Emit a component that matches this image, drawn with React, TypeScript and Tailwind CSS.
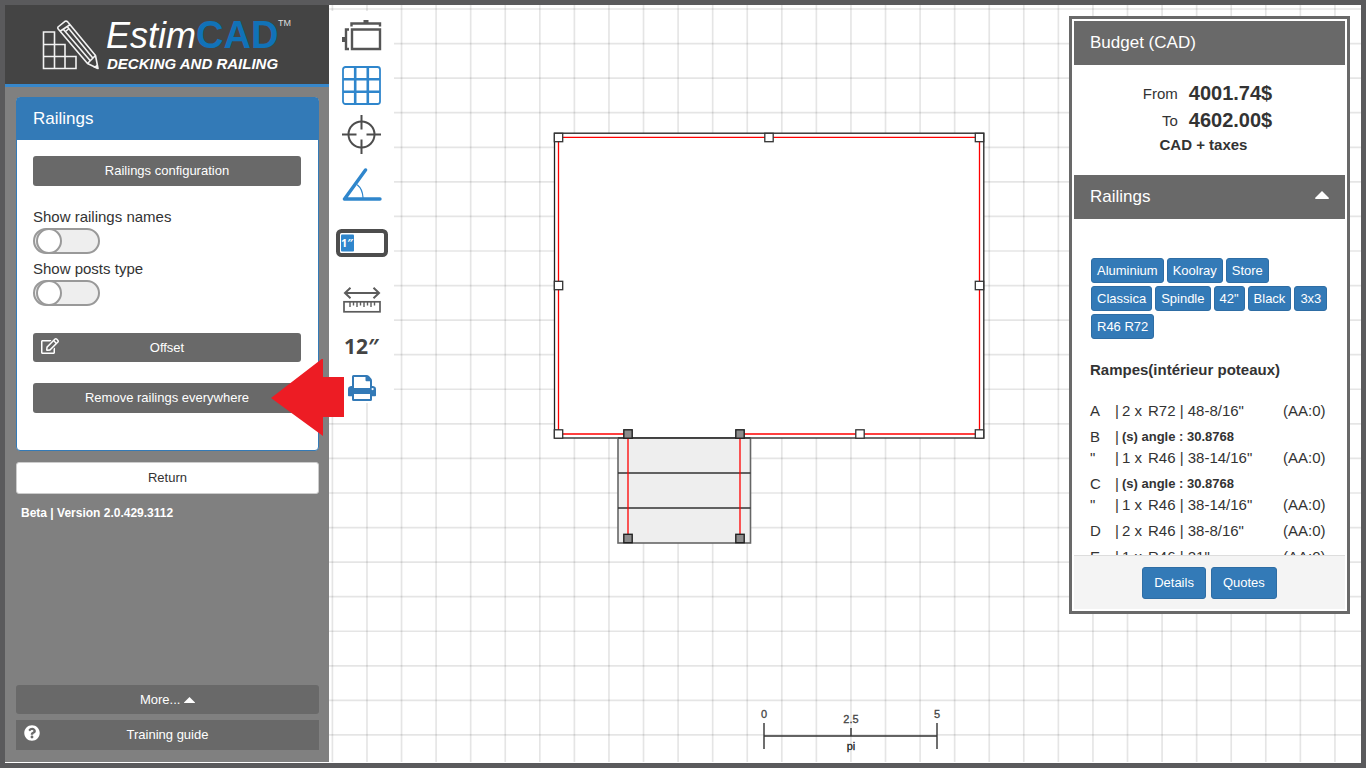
import React from "react"
import { FaQuestionCircle, FaRegEdit } from "react-icons/fa"

const GRID_STEP = 34.57

const tags = [
  "Aluminium",
  "Koolray",
  "Store",
  "Classica",
  "Spindle",
  '42"',
  "Black",
  "3x3",
  "R46 R72",
]

type RailingRow = {
  name: string
  angle?: string
  qty?: string
  item?: string
}

const rows: RailingRow[] = [
  { name: "A", qty: "2 x", item: 'R72 | 48-8/16"' },
  { name: "B", angle: "(s) angle : 30.8768" },
  { name: '"', qty: "1 x", item: 'R46 | 38-14/16"' },
  { name: "C", angle: "(s) angle : 30.8768" },
  { name: '"', qty: "1 x", item: 'R46 | 38-14/16"' },
  { name: "D", qty: "2 x", item: 'R46 | 38-8/16"' },
  { name: "E", qty: "1 x", item: 'R46 | 21"' },
]

const openPosts = [
  [558.5, 137.5],
  [769, 137.5],
  [979.5, 137.5],
  [558.5, 285.5],
  [979.5, 285.5],
  [558.5, 434],
  [860, 434],
  [979.5, 434],
]

const stairPosts = [
  [628, 434],
  [740, 434],
  [628, 538.5],
  [740, 538.5],
]

const Logo = () => (
  <svg width="256" height="66" viewBox="40 10 256 66" role="img" aria-label="EstimCAD">
    <g fill="none" stroke="#f2f2f2" strokeWidth="1.6">
      <path d="M43.5 32H54.5V68.5H43.5ZM43.5 44.5H65V68.5M43.5 56.5H76V68.5H43.5M54.5 44V68.5M65 56V68.5" />
      <path
        strokeLinejoin="round"
        d="M58 27 L65 21.3 Q67 20.5 68.2 22.4 L95.5 55.5 L98 68.5 L87.5 63.5 L58.2 29 Q57.3 28 58 27ZM60.5 31 L70.3 24.5M87.5 63.5 L95.5 55.5M63.5 29.5 L90.5 61M67.5 27 L93 58.3M65.5 31.5 L68.5 29"
      />
    </g>
    <path d="M93.3 67.6 L97 64.6 L98.3 69Z" fill="#f2f2f2" />
    <text x="106" y="48" fontSize="36" fontStyle="italic" fill="#fff">
      Estim
    </text>
    <text x="196" y="48" fontSize="38" fontWeight="bold" fill="#1172b8">
      CAD
    </text>
    <text x="278" y="26" fontSize="9" fill="#ddd">
      TM
    </text>
    <text x="107" y="69" fontSize="15" fontWeight="bold" fontStyle="italic" fill="#fff">
      DECKING AND RAILING
    </text>
  </svg>
)

const CaretUp = ({ width }: { width: number }) => (
  <svg width={width} viewBox="0 0 14 8" className="inline-block fill-white" aria-hidden="true">
    <path d="M7 0 L14 7 Q14 8 13 8 H1 Q0 8 0 7Z" />
  </svg>
)

type ToggleProps = {
  id: string
  label: string
}

const Toggle: React.FC<ToggleProps> = ({ id, label }) => {
  return (
    <label htmlFor={id} className="block w-fit cursor-pointer text-[15px] leading-[22px]">
      {label}
      <input id={id} type="checkbox" className="peer sr-only" />
      <span className="flex h-[26px] w-[67px] rounded-full border-2 border-[#999] bg-[#eee] peer-checked:justify-end peer-checked:bg-[#337ab7]">
        <span className="-my-0.5 ml-px size-[26px] rounded-full border-2 border-[#999] bg-white" />
      </span>
    </label>
  )
}

const Sidebar = () => {
  return (
    <aside className="flex w-[324px] shrink-0 flex-col bg-[#808080]">
      <header className="flex h-[82px] shrink-0 items-start border-b-3 border-[#3787cb] bg-[#444] pt-[5px] pl-[35px]">
        <Logo />
      </header>
      <div className="flex grow flex-col pt-2.5 pr-2.5 pb-3 pl-[11px]">
        <section className="rounded border border-[#337ab7] bg-white">
          <h2 className="bg-[#337ab7] px-4 py-2.5 text-[17px] leading-[22px] text-white">
            Railings
          </h2>
          <div className="pt-4 pr-[17px] pb-[37px] pl-4">
            <button className="h-[30px] w-full rounded-[3px] bg-[#696969] text-[13px] text-white">
              Railings configuration
            </button>
            <div className="mt-5 flex flex-col gap-1">
              <Toggle id="railing-names" label="Show railings names" />
              <Toggle id="post-types" label="Show posts type" />
            </div>
            <button className="relative mt-[27px] h-[29px] w-full rounded-[3px] bg-[#696969] text-[13px] text-white">
              <FaRegEdit className="absolute top-1 left-2 size-[18px]" />
              Offset
            </button>
            <div className="relative mt-[21px]">
              <button className="h-[30px] w-full rounded-[3px] bg-[#696969] text-[13px] text-white">
                Remove railings everywhere
              </button>
              <svg
                width="73"
                height="80"
                viewBox="0 0 73 80"
                className="pointer-events-none absolute -top-6 left-[238px] z-10"
                aria-hidden="true"
              >
                <path d="M0 39 L52 -1 V18 H73 V58 H52 V77Z" fill="#ed1c24" />
              </svg>
            </div>
          </div>
        </section>
        <button className="mt-[11px] h-8 rounded-[3px] border border-[#ccc] bg-white text-[13px] text-[#333]">
          Return
        </button>
        <p className="mt-[11px] ml-[5px] text-[12px] leading-4 font-bold text-white">
          Beta | Version 2.0.429.3112
        </p>
        <button className="mt-auto h-[29px] rounded-[3px] bg-[#696969] text-[13px] text-white">
          More... <CaretUp width={11} />
        </button>
        <button className="relative mt-1.5 h-[30px] bg-[#696969] text-[13px] text-white">
          <FaQuestionCircle className="absolute top-[5px] left-2 size-4" />
          Training guide
        </button>
      </div>
    </aside>
  )
}

const Toolbar = () => {
  return (
    <nav className="relative mt-1.5 flex w-[65px] shrink-0 flex-col items-center self-start bg-white">
      <button aria-label="Deck" className="flex h-[49px] items-center">
        <svg width="40" height="32" viewBox="0 0 40 32" fill="none" stroke="#555" strokeWidth="2.4">
          <path d="M10 9.5H38V29H10ZM9.5 6.5V3.5H38V6.5M7 9.5H4V29H7" />
          <path d="M21.5 1.5H26.5M1.5 17V22" strokeWidth="3" />
        </svg>
      </button>
      <button aria-label="Grid" className="flex h-[50px] items-center">
        <svg width="39" height="39" viewBox="0 0 39 39" fill="none" stroke="#2f86cc">
          <rect x="1" y="1" width="37" height="37" rx="2.5" strokeWidth="1.8" />
          <path d="M13.2 1V38M25.8 1V38M1 13.2H38M1 25.8H38" strokeWidth="2.6" />
        </svg>
      </button>
      <button aria-label="Center" className="flex h-[48px] items-center">
        <svg width="39" height="39" viewBox="0 0 39 39" fill="none" stroke="#4d4d4d" strokeWidth="2">
          <circle cx="19.5" cy="19.5" r="13" />
          <path d="M19.5 0V14.5M19.5 24.5V39M0 19.5H14.5M24.5 19.5H39" />
        </svg>
      </button>
      <button aria-label="Angle" className="flex h-[53px] items-center">
        <svg width="40" height="34" viewBox="0 0 40 34" fill="none" stroke="#2f86cc" strokeLinecap="round">
          <path d="M23.5 2 L2.5 31H38" strokeWidth="3.4" strokeLinejoin="round" />
          <path d="M15.5 17 Q20.5 21 21 29.5" strokeWidth="1.2" />
        </svg>
      </button>
      <button aria-label="Snap" className="flex h-[64px] items-center">
        <svg width="52" height="28" viewBox="0 0 52 28">
          <rect x="2" y="2" width="48" height="24" rx="3.5" fill="#fff" stroke="#4d4d4d" strokeWidth="4" />
          <rect x="5" y="5.5" width="13" height="17" rx="1" fill="#2f86cc" />
          <text x="5" y="18" fontSize="11" fontWeight="bold" fontFamily="Open Sans" fill="#fff">
            1″
          </text>
        </svg>
      </button>
      <button aria-label="Measure" className="flex h-[49px] items-center">
        <svg width="38" height="26" viewBox="0 0 38 26" fill="none" stroke="#5c5c5c" strokeWidth="2">
          <path d="M2 6H36M7.5 .8 L2 6 L7.5 11.2M30.5 .8 L36 6 L30.5 11.2" />
          <rect x="1" y="14.8" width="36" height="10" strokeWidth="1.7" />
          <path d="M7 15V20M10.5 15V18.5M14 15V20M17.5 15V18.5M21 15V20M24.5 15V18.5M28 15V20M31.5 15V18.5" strokeWidth="1.4" />
        </svg>
      </button>
      <button className="h-[49px] pb-1 font-['Open_Sans',sans-serif] text-[21px] font-bold text-[#444]">
        12″
      </button>
      <button aria-label="Print" className="flex h-[30px] items-center">
        <svg width="28" height="26" viewBox="0 0 28 26">
          <path
            fill="#337ab7"
            fillRule="evenodd"
            d="M5.5 0H18.5Q20 0 21 1L23.2 3.5Q24 4.5 24 5.8V11H25Q28 11.5 28 14.2V20.5Q28 21.2 27.2 21.2H24V24.5Q24 26 22.5 26H5.5Q4 26 4 24.5V21.2H.8Q0 21.2 0 20.5V14.2Q0 11.5 3 11H4V1.5Q4 0 5.5 0ZM6 2V13H22V6.2H18.5Q17.5 6.2 17.5 5.2V2ZM6 19V24H22V19ZM24.6 13A1.1 1.1 0 1 0 24.6 15.2A1.1 1.1 0 1 0 24.6 13Z"
          />
        </svg>
      </button>
    </nav>
  )
}

const DeckPlan = () => {
  return (
    <svg className="absolute inset-0 h-full w-full" role="img" aria-label="Deck plan">
      <g stroke="#000" strokeOpacity="0.1" strokeWidth="1.7">
        {Array.from({ length: 80 }, (_, i) => (
          <line key={`v${i}`} x1={3.4 + i * GRID_STEP} x2={3.4 + i * GRID_STEP} y1="0" y2="100%" />
        ))}
        {Array.from({ length: 60 }, (_, i) => (
          <line key={`h${i}`} y1={4 + i * GRID_STEP} y2={4 + i * GRID_STEP} x1="0" x2="100%" />
        ))}
      </g>
      {/* plan coordinates start at the outer corner of the window frame */}
      <g transform="translate(-329 -5)">
        <rect x="554.5" y="133.2" width="429.3" height="304.8" fill="#fff" stroke="#222" strokeWidth="1.3" />
        <g stroke="#666" strokeWidth="1.6">
          <rect x="618" y="438" width="132.5" height="105" fill="#eee" />
          <path d="M618 438H750.5M618 473H750.5M618 508H750.5" stroke="#333" strokeWidth="1.4" />
        </g>
        <g fill="none" stroke="#f00" strokeWidth="1.3">
          <path d="M558.5 137.3H979.5V434H740V538M558.5 137.3V434H628V538" />
        </g>
        {openPosts.map(([x, y]) => (
          <rect key={`${x}-${y}`} x={x - 4.2} y={y - 4.2} width="8.4" height="8.4" fill="#fff" stroke="#333" strokeWidth="1.3" />
        ))}
        {stairPosts.map(([x, y]) => (
          <rect key={`${x}-${y}`} x={x - 4.2} y={y - 4.2} width="8.4" height="8.4" fill="#8c8c8c" stroke="#222" strokeWidth="1.4" />
        ))}
        <path d="M764 723V749M937 723V749M764 736H937M851 728V736" stroke="#333" strokeWidth="1.4" />
        <g fontSize="11" textAnchor="middle" fill="#444" stroke="#444" strokeWidth="0.3">
          <text x="764" y="718">0</text>
          <text x="851" y="723">2.5</text>
          <text x="937" y="718">5</text>
          <text x="851" y="750" fill="#000">pi</text>
        </g>
      </g>
    </svg>
  )
}

const BudgetPanel = () => {
  return (
    <section className="relative mt-[11px] mr-[11px] ml-auto w-[281px] shrink-0 self-start border-3 border-[#696969] bg-white p-0.5">
      <h2 className="bg-[#696969] px-4 py-[11px] text-[17px] leading-[22px] text-white">
        Budget (CAD)
      </h2>
      <div className="grid grid-cols-[auto_auto] items-center justify-center gap-x-[11px] pt-[15px] pr-1 pb-[19px] text-[15px] leading-[22px]">
        <span className="text-right">From</span>
        <span className="text-[20px] leading-[27px] font-bold">4001.74$</span>
        <span className="text-right">To</span>
        <span className="text-[20px] leading-[27px] font-bold">4602.00$</span>
        <span className="col-span-2 pr-2 text-center font-bold">CAD + taxes</span>
      </div>
      <h2>
        <button className="flex w-full justify-between bg-[#696969] px-4 py-[11px] text-left text-[17px] leading-[22px] text-white">
          Railings
          <span className="leading-4">
            <CaretUp width={14} />
          </span>
        </button>
      </h2>
      <div className="max-h-[336px] overflow-y-auto px-4 pt-[39px] [scrollbar-width:none]">
        <ul className="flex flex-wrap gap-[3px] pl-px">
          {tags.map((tag) => (
            <li
              key={tag}
              className="rounded-[3px] border border-[#2e6da4] bg-[#337ab7] px-[5px] text-[13px] leading-[23px] text-white"
            >
              {tag}
            </li>
          ))}
        </ul>
        <h3 className="mt-5 text-[15px] leading-[22px] font-bold">Rampes(intérieur poteaux)</h3>
        <table className="mt-3.5 w-full text-[15px] leading-[21px] whitespace-nowrap">
          <tbody>
            {rows.map((row, i) => (
              <tr key={i} className={row.name === '"' ? "" : "*:pt-[5px]"}>
                <td className="w-[25px]">{row.name}</td>
                <td className="w-[7px]">|</td>
                {row.angle ? (
                  <td colSpan={3} className="text-[13px] font-bold">
                    {row.angle}
                  </td>
                ) : (
                  <>
                    <td className="w-[26px]">{row.qty}</td>
                    <td>{row.item}</td>
                    <td className="w-[46px]">(AA:0)</td>
                  </>
                )}
              </tr>
            ))}
          </tbody>
        </table>
      </div>
      <div className="flex justify-center gap-[5px] border-t border-[#ddd] bg-[#f4f4f4] pt-[11px] pb-2.5 text-[13px] text-white">
        <button className="h-8 rounded-[3px] border border-[#2e6da4] bg-[#337ab7] px-[11px]">
          Details
        </button>
        <button className="h-8 rounded-[3px] border border-[#2e6da4] bg-[#337ab7] px-[11px]">
          Quotes
        </button>
      </div>
    </section>
  )
}

const App = () => {
  return (
    <div className="flex min-h-screen border-[5px] border-[#5a5a5c] bg-white pb-px font-['Liberation_Sans',Arial,sans-serif] text-[#333]">
      <Sidebar />
      <main className="relative flex min-w-0 grow">
        <DeckPlan />
        <Toolbar />
        <BudgetPanel />
      </main>
    </div>
  )
}

export default App
